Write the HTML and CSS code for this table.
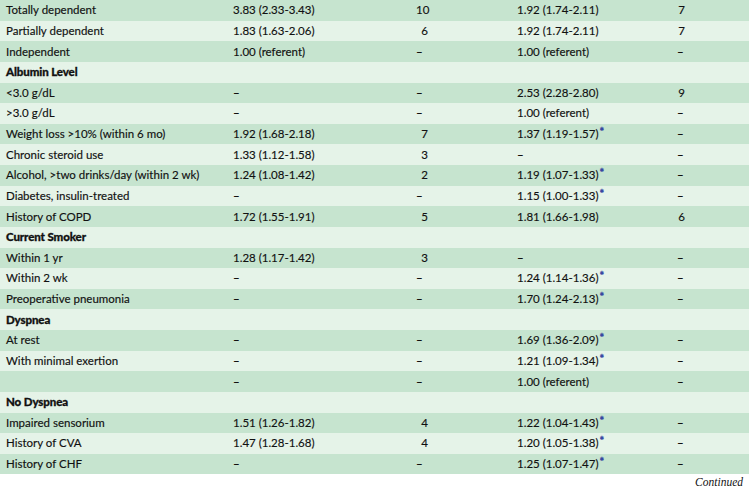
FILE: index.html
```html
<!DOCTYPE html>
<html>
<head>
<meta charset="utf-8">
<link rel="stylesheet" href="styles.css">
</head>
<body>
<table class="risk">
<colgroup><col class="c1"><col class="c2"><col class="c3"><col class="c4"><col class="c5"></colgroup>
<tbody>
<tr><td>Totally dependent</td><td>3.83 (2.33-3.43)</td><td><span class="n">10</span></td><td>1.92 (1.74-2.11)</td><td><span class="n">7</span></td></tr>
<tr><td>Partially dependent</td><td>1.83 (1.63-2.06)</td><td><span class="n">6</span></td><td>1.92 (1.74-2.11)</td><td><span class="n">7</span></td></tr>
<tr><td>Independent</td><td>1.00 (referent)</td><td><span class="n na">–</span></td><td>1.00 (referent)</td><td><span class="n na">–</span></td></tr>
<tr class="head"><td>Albumin Level</td><td></td><td></td><td></td><td></td></tr>
<tr><td>&lt;3.0 g/dL</td><td><span class="d">–</span></td><td><span class="n na">–</span></td><td>2.53 (2.28-2.80)</td><td><span class="n">9</span></td></tr>
<tr><td>&gt;3.0 g/dL</td><td><span class="d">–</span></td><td><span class="n na">–</span></td><td>1.00 (referent)</td><td><span class="n na">–</span></td></tr>
<tr><td>Weight loss &gt;10% (within 6 mo)</td><td>1.92 (1.68-2.18)</td><td><span class="n">7</span></td><td>1.37 (1.19-1.57)<sup>*</sup></td><td><span class="n na">–</span></td></tr>
<tr><td>Chronic steroid use</td><td>1.33 (1.12-1.58)</td><td><span class="n">3</span></td><td><span class="d">–</span></td><td><span class="n na">–</span></td></tr>
<tr><td>Alcohol, &gt;two drinks/day (within 2 wk)</td><td>1.24 (1.08-1.42)</td><td><span class="n">2</span></td><td>1.19 (1.07-1.33)<sup>*</sup></td><td><span class="n na">–</span></td></tr>
<tr><td>Diabetes, insulin-treated</td><td><span class="d">–</span></td><td><span class="n na">–</span></td><td>1.15 (1.00-1.33)<sup>*</sup></td><td><span class="n na">–</span></td></tr>
<tr><td>History of COPD</td><td>1.72 (1.55-1.91)</td><td><span class="n">5</span></td><td>1.81 (1.66-1.98)</td><td><span class="n">6</span></td></tr>
<tr class="head"><td>Current Smoker</td><td></td><td></td><td></td><td></td></tr>
<tr><td>Within 1 yr</td><td>1.28 (1.17-1.42)</td><td><span class="n">3</span></td><td><span class="d">–</span></td><td><span class="n na">–</span></td></tr>
<tr><td>Within 2 wk</td><td><span class="d">–</span></td><td><span class="n na">–</span></td><td>1.24 (1.14-1.36)<sup>*</sup></td><td><span class="n na">–</span></td></tr>
<tr><td>Preoperative pneumonia</td><td><span class="d">–</span></td><td><span class="n na">–</span></td><td>1.70 (1.24-2.13)<sup>*</sup></td><td><span class="n na">–</span></td></tr>
<tr class="head"><td>Dyspnea</td><td></td><td></td><td></td><td></td></tr>
<tr><td>At rest</td><td><span class="d">–</span></td><td><span class="n na">–</span></td><td>1.69 (1.36-2.09)<sup>*</sup></td><td><span class="n na">–</span></td></tr>
<tr><td>With minimal exertion</td><td><span class="d">–</span></td><td><span class="n na">–</span></td><td>1.21 (1.09-1.34)<sup>*</sup></td><td><span class="n na">–</span></td></tr>
<tr><td></td><td><span class="d">–</span></td><td><span class="n na">–</span></td><td>1.00 (referent)</td><td><span class="n na">–</span></td></tr>
<tr class="head"><td>No Dyspnea</td><td></td><td></td><td></td><td></td></tr>
<tr><td>Impaired sensorium</td><td>1.51 (1.26-1.82)</td><td><span class="n">4</span></td><td>1.22 (1.04-1.43)<sup>*</sup></td><td><span class="n na">–</span></td></tr>
<tr><td>History of CVA</td><td>1.47 (1.28-1.68)</td><td><span class="n">4</span></td><td>1.20 (1.05-1.38)<sup>*</sup></td><td><span class="n na">–</span></td></tr>
<tr><td>History of CHF</td><td><span class="d">–</span></td><td><span class="n na">–</span></td><td>1.25 (1.07-1.47)<sup>*</sup></td><td><span class="n na">–</span></td></tr>
</tbody>
</table>
<div class="cont">Continued</div>
</body>
</html>
```

FILE: styles.css
```css
html, body {
  margin: 0;
  padding: 0;
  background: #ffffff;
}
body {
  width: 749px;
  font-family: Lato, "Open Sans", sans-serif;
  font-size: 11.5px;
  color: #111111;
  -webkit-text-stroke: 0.15px #111111;
}
.risk {
  width: 749px;
  border-collapse: collapse;
  table-layout: fixed;
}
.c1 { width: 227px; }
.c2 { width: 183px; }
.c3 { width: 101px; }
.c4 { width: 160px; }
.c5 { width: 78px; }
.risk tr {
  height: 20.64px;
}
.risk tr:nth-child(odd) { background: #c6e4cf; }
.risk tr:nth-child(even) { background: #e5f3e8; }
.risk td {
  padding: 0 0 0 6px;
  line-height: 14px;
  white-space: nowrap;
  vertical-align: middle;
}
.n {
  display: inline-block;
  width: 12px;
  text-align: right;
}
.risk td:nth-child(5) .n { width: 8px; }
.n.na {
  text-align: left;
  font-weight: 700;
}
.d { font-weight: 700; }
.head td {
  font-weight: 900;
  letter-spacing: -0.1px;
  -webkit-text-stroke: 0.3px #111111;
}
sup {
  color: #2d3c9e;
  -webkit-text-stroke: 0.3px #2d3c9e;
  font-size: 11px;
  font-weight: 700;
  line-height: 0;
  vertical-align: 2px;
  margin-left: 1px;
}
.cont {
  text-align: right;
  padding: 1px 6px 0 0;
  font-family: "Liberation Serif", serif;
  font-style: italic;
  font-size: 11.5px;
  line-height: 14px;
  -webkit-text-stroke: 0;
}
```
